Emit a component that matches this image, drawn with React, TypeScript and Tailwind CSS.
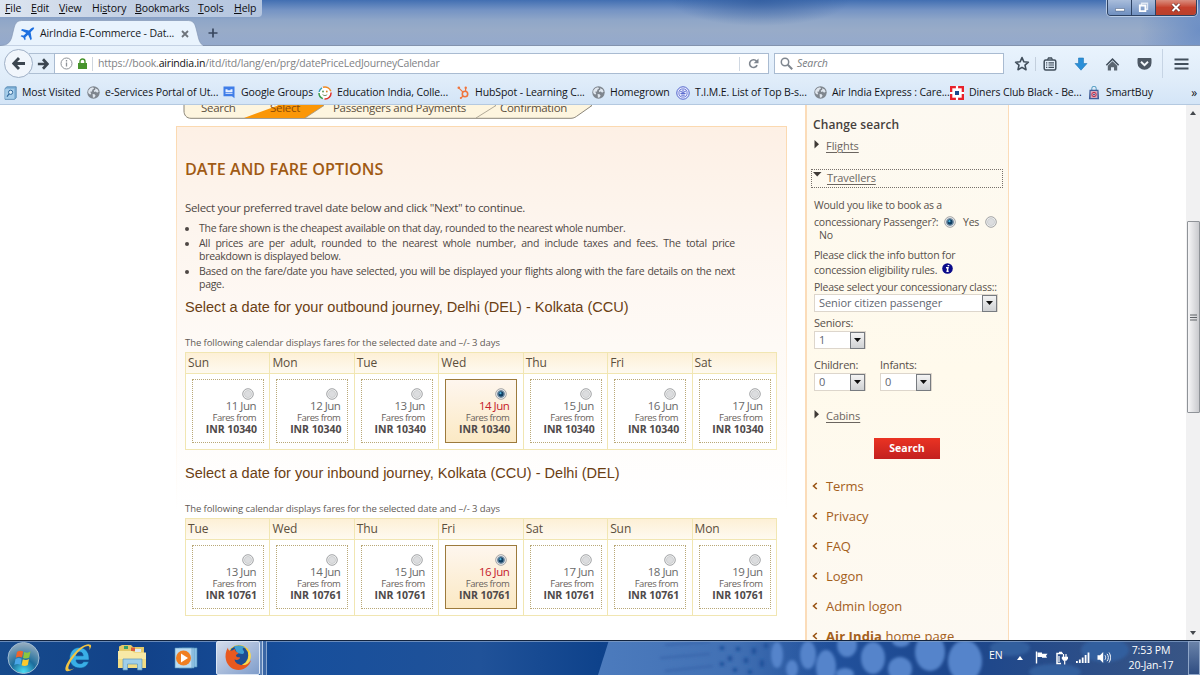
import type { ReactNode } from 'react';

const MENUS = [
  { first: 'F', rest: 'ile', width: 'w-[26px]' },
  { first: 'E', rest: 'dit', width: 'w-[28px]' },
  { first: 'V', rest: 'iew', width: 'w-[33px]' },
  { before: 'Hi', first: 's', rest: 'tory', width: 'w-[43px]' },
  { first: 'B', rest: 'ookmarks', width: 'w-[63px]' },
  { first: 'T', rest: 'ools', width: 'w-[36px]' },
  { first: 'H', rest: 'elp', width: 'w-[28px]' },
];

const OUTBOUND = [
  { day: 'Sun', date: '11 Jun' },
  { day: 'Mon', date: '12 Jun' },
  { day: 'Tue', date: '13 Jun' },
  { day: 'Wed', date: '14 Jun' },
  { day: 'Thu', date: '15 Jun' },
  { day: 'Fri', date: '16 Jun' },
  { day: 'Sat', date: '17 Jun' },
];

const INBOUND = [
  { day: 'Tue', date: '13 Jun' },
  { day: 'Wed', date: '14 Jun' },
  { day: 'Thu', date: '15 Jun' },
  { day: 'Fri', date: '16 Jun' },
  { day: 'Sat', date: '17 Jun' },
  { day: 'Sun', date: '18 Jun' },
  { day: 'Mon', date: '19 Jun' },
];

const LINKS = ['Terms', 'Privacy', 'FAQ', 'Logon', 'Admin logon'];

function GlobeIcon() {
  return (
    <svg width="13" height="13" viewBox="0 0 13 13">
      <circle cx="6.5" cy="6.5" r="6.2" fill="#7f868e" />
      <path d="M1.3 4.6 3.5 2l2.6-.7 1 1.3-1.8 1.2-.3 1.7-1.8.3 1 1.8-1 1.2-2-1.7zM8 2.2l2.4 1 1.3 2.4-1.6 1.2-1.3-1.2-1.6.5-.4-1.6 1.5-.7zM5.6 8l2 .3 1 1.5-1.5 2-1.2-.3z" fill="#dfe6ee" />
    </svg>
  );
}

function MostVisitedIcon() {
  return (
    <svg width="13" height="14" viewBox="0 0 13 14">
      <path d="M1 2.5 3 .8h9.200v11L10.500 13.3H1z" fill="#7fb2d9" stroke="#4c80ab" strokeWidth=".8" />
      <path d="M1.2 2.8h9v10h-9z" fill="#a6cdea" />
      <circle cx="6.6" cy="6.3" r="2.1" fill="#dff0fb" stroke="#2f6699" strokeWidth="1" />
      <path d="m5 8-2 2.6" stroke="#2f6699" strokeWidth="1.2" />
    </svg>
  );
}

function GroupsIcon() {
  return (
    <svg width="12" height="13" viewBox="0 0 12 13">
      <path d="M.5.5h11v11.8L9 10.2H.5z" fill="#3f7de8" />
      <path d="M2.5 3.2h2v1h3v-1h2v3h-7zM2.5 7.2h7v.9h-7z" fill="#e9f1ff" />
    </svg>
  );
}

function EducationIcon() {
  return (
    <svg width="14" height="14" viewBox="0 0 14 14" fill="none" strokeWidth="1.5">
      <circle cx="7" cy="7" r="6" fill="#fff" />
      <path d="M5 1.300a6 6 0 0 1 7.800 4" stroke="#f08a24" />
      <path d="M13 6.500A6 6 0 0 1 6.500 13" stroke="#e0322c" />
      <path d="M4.800 12.600A6 6 0 0 1 1 7" stroke="#3b9b4b" />
      <path d="M1.100 5.800A6 6 0 0 1 4 1.800" stroke="#37a0b8" />
      <circle cx="5" cy="5.500" r=".9" fill="#57914e" stroke="none" />
      <circle cx="8.800" cy="5.500" r=".9" fill="#d9822c" stroke="none" />
      <path d="M4.600 8.600c1.400 1.300 3.400 1.300 4.600 0" stroke="#7d8f6a" strokeWidth="1" />
    </svg>
  );
}

function HubspotIcon() {
  return (
    <svg width="13" height="13" viewBox="0 0 13 13" fill="none" stroke="#f0743c">
      <circle cx="8" cy="8" r="2.7" strokeWidth="1.6" />
      <path d="M8.6 5.2V2M6 6.2 2.2 2.4M6 10l-2 2" strokeWidth="1.2" />
      <g fill="#f0743c" stroke="none">
        <circle cx="8.7" cy="1.8" r="1.2" />
        <circle cx="1.8" cy="1.7" r="1.3" />
        <circle cx="3.8" cy="12" r="1" />
      </g>
    </svg>
  );
}

function TimeIcon() {
  return (
    <svg width="14" height="14" viewBox="0 0 15 15" fill="none" stroke="#4b5dc8">
      <circle cx="7.5" cy="7.5" r="6.7" fill="#e8ecff" />
      <circle cx="7.5" cy="7.5" r="4.4" strokeWidth=".8" />
      <path d="M4.500 5.500 7.500 7l3-1.500M4.800 8h5.400M7.500 4v2M5.600 9.800h3.800" strokeWidth="1" />
    </svg>
  );
}

function DinersIcon() {
  return (
    <svg width="14" height="14" viewBox="0 0 14 14">
      <path d="M0 0h14v14H0z" fill="#e8222b" />
      <path d="M2.3 2.3h9.4v9.4H2.3z" fill="#fff" />
      <path d="M5.9 0h2.2v3H5.9zM5.9 11h2.2v3H5.9zM0 5.9h3v2.2H0zM11 5.9h3v2.2h-3z" fill="#fff" />
      <path d="M5 5h4v4H5z" fill="#1a4a8e" />
    </svg>
  );
}

function SmartBuyIcon() {
  return (
    <svg width="12" height="14" viewBox="0 0 12 14">
      <path d="M3.8 4V2.4a2.2 2.2 0 0 1 4.4 0V4" fill="none" stroke="#4c9ac0" strokeWidth="1" />
      <path d="M1.5 3.8h9l.6 9.4H.9z" fill="#3f5c96" />
      <path d="M2.6 5h6.8v7H2.6z" fill="#d8a9bb" />
      <circle cx="6" cy="8.5" r="2.2" fill="none" stroke="#c12d4a" />
      <circle cx="6" cy="8.5" r=".8" fill="#23407d" />
    </svg>
  );
}

const BOOKMARKS: { label: string; icon: ReactNode; width: string }[] = [
  { label: 'Most Visited', icon: <MostVisitedIcon />, width: 'w-[83px]' },
  { label: 'e-Services Portal of Ut...', icon: <GlobeIcon />, width: 'w-[136px]' },
  { label: 'Google Groups', icon: <GroupsIcon />, width: 'w-[96px]' },
  { label: 'Education India, Colle...', icon: <EducationIcon />, width: 'w-[138px]' },
  { label: 'HubSpot - Learning C...', icon: <HubspotIcon />, width: 'w-[135px]' },
  { label: 'Homegrown', icon: <GlobeIcon />, width: 'w-[85px]' },
  { label: 'T.I.M.E. List of Top B-s...', icon: <TimeIcon />, width: 'w-[137px]' },
  { label: 'Air India Express : Care...', icon: <GlobeIcon />, width: 'w-[137px]' },
  { label: 'Diners Club Black - Be...', icon: <DinersIcon />, width: 'w-[137px]' },
  { label: 'SmartBuy', icon: <SmartBuyIcon />, width: 'w-[70px]' },
];

function WindowControls() {
  return (
    <div className="flex h-[16px] w-[90px] overflow-hidden rounded-b-[4px] border border-t-0 border-[#2d4263] shadow-[0_0_0_1px_#b9cbe4]">
      <div className="flex w-[24px] items-center justify-center border-r border-[#2d4263] bg-gradient-to-b from-[#a9bddb] to-[#6f8fc0]">
        <svg width="10" height="10" viewBox="0 0 10 10">
          <path d="M.5 5.5h9v2.6h-9z" fill="#fff" stroke="#44587b" strokeWidth=".5" />
        </svg>
      </div>
      <div className="flex w-[24px] items-center justify-center border-r border-[#2d4263] bg-gradient-to-b from-[#a9bddb] to-[#6f8fc0]">
        <svg width="11" height="11" viewBox="0 0 11 11" fill="none">
          <path d="M3.5 3V1.2h6v6H8" stroke="#dfe7f3" strokeWidth="1.4" />
          <path d="M1.8 3.5h5.6v5.6H1.8z" stroke="#fff" strokeWidth="1.8" />
        </svg>
      </div>
      <div className="flex flex-1 items-center justify-center bg-gradient-to-b from-[#d98d7f] via-[#c5402c] to-[#b8402c]">
        <svg width="10" height="9" viewBox="0 0 10 9">
          <path d="m1.5 1 7 7M8.5 1l-7 7" stroke="#5b2723" strokeWidth="3.2" />
          <path d="m1.5 1 7 7M8.5 1l-7 7" stroke="#fff" strokeWidth="2.1" />
        </svg>
      </div>
    </div>
  );
}

function TitleBar() {
  return (
    <div className="flex h-[17px] items-start justify-between pr-[3px]">
      <div className="flex h-[17px] w-[262px] items-center rounded-br-[4px] bg-gradient-to-r from-[#dde5f0] via-[#c3d0e4] to-[#b4c5df] pt-px pl-[5px] text-[10.5px] tracking-[-0.1px] whitespace-nowrap text-[#0c0c10]">
        {MENUS.map((m) => (
          <span key={m.first + m.rest} className={m.width}>
            {m.before}
            <u className="underline-offset-1">{m.first}</u>
            {m.rest}
          </span>
        ))}
      </div>
      <WindowControls />
    </div>
  );
}

function TabStrip() {
  return (
    <div className="flex h-[29px] items-start border-b border-[#8393ae]">
      <div className="relative h-[29px] w-[203px]">
        <svg className="absolute inset-0" width="203" height="29" viewBox="0 0 203 29">
          <path d="M0 29v-.5C8 28.500 11 25 12.500 17l1.500-6c1.500-6 4-7.500 9-7.500h164c5 0 7.500 1.500 9 7.500l1.500 6c1.300 6 2.500 10 6 11.500v.5z" fill="#e9f3fd" stroke="#8496b4" strokeWidth=".7" />
        </svg>
        <div className="relative flex h-[33px] items-center pl-[20px] text-[10.5px] text-[#16181c]">
          <svg width="15" height="14" viewBox="0 0 15 14">
            <path d="M14 .6c-.9-.6-2.200.1-3.300 1.200L9 3.400 2.200 2 .9 3.200l5.300 2.700L3.700 8.500l-2.300-.2-.8.900 2.700 1.300 1.400 2.800.9-.8-.2-2.300 2.700-2.500 2.500 5.500 1.200-1.200-1.200-6.800 1.700-1.600C13.600 2.500 14.600 1.300 14 .6z" fill="#1c6fe0" />
          </svg>
          <span className="ml-[5px] w-[141px] tracking-[-0.12px] whitespace-nowrap">AirIndia E-Commerce - Dat...</span>
          <svg width="8" height="8" viewBox="0 0 8 8">
            <path d="m1 1 6 6M7 1 1 7" stroke="#6e747c" strokeWidth="1.8" />
          </svg>
        </div>
      </div>
      <svg className="mt-[11px] ml-[5px]" width="10" height="10" viewBox="0 0 10 10">
        <path d="M5 .5v9M.5 5h9" stroke="#39475f" strokeWidth="1.7" />
      </svg>
    </div>
  );
}

function NavBar() {
  return (
    <div className="flex h-[35px] items-center bg-gradient-to-b from-[#e9f3fd] to-[#dfecf9] pl-[4px]">
      <div className="relative z-10 flex size-[29px] items-center justify-center rounded-full border border-[#9fb0c6] bg-[#f1f6fc]">
        <svg width="14" height="13" viewBox="0 0 14 13" fill="none" stroke="#3c4650">
          <path d="M7 1 1.800 6.500 7 12M2 6.500h11" strokeWidth="2.800" />
        </svg>
      </div>
      <div className="-ml-[4px] flex h-[21px] w-[25px] items-center justify-center border-y border-[#aebfd3] bg-[#e4effa] pl-[2px]">
        <svg width="12" height="12" viewBox="0 0 14 13" fill="none" stroke="#3c4650">
          <path d="m7 1 5.200 5.500L7 12M12 6.500H1" strokeWidth="3.200" />
        </svg>
      </div>
      <div className="flex h-[21px] w-[715px] items-center border border-[#a9bbd1] bg-white pl-[5px] text-[10.5px]">
        <svg width="13" height="13" viewBox="0 0 13 13" fill="none" stroke="#8d9298">
          <circle cx="6.500" cy="6.500" r="5.500" />
          <path d="M6.500 5.500v4M6.500 3v1.400" strokeWidth="1.300" />
        </svg>
        <svg className="ml-[5px]" width="9" height="12" viewBox="0 0 9 12">
          <path d="M2 5.500V3.500a2.500 2.500 0 0 1 5 0v2" fill="none" stroke="#47932c" strokeWidth="1.400" />
          <path d="M0 5h9v6H0z" fill="#47932c" />
        </svg>
        <div className="mx-[5px] h-[14px] w-px bg-[#cfd6de]" />
        <span className="flex-1 pt-px tracking-[-0.19px] whitespace-nowrap text-[#808285]">
          https://book.<span className="text-[#101010]">airindia.in</span>/itd/itd/lang/en/prg/datePriceLedJourneyCalendar
        </span>
        <div className="h-[14px] w-px bg-[#d0d8e2]" />
        <svg className="mr-[9px] ml-[8px]" width="11" height="11" viewBox="0 0 11 11" fill="none" stroke="#7f868f">
          <path d="M8.600 3.200a3.900 3.900 0 1 0 .5 3.900" strokeWidth="1.600" />
          <path d="M10.500.5v4.800H5.700z" fill="#7f868f" stroke="none" />
        </svg>
      </div>
      <div className="ml-[5px] flex h-[21px] w-[230px] items-center border border-[#a9bbd1] bg-white pl-[5px]">
        <svg width="13" height="13" viewBox="0 0 13 13" fill="none" stroke="#7f868f">
          <circle cx="5" cy="5" r="3.700" strokeWidth="1.500" />
          <path d="m7.800 7.800 4.400 4.400" strokeWidth="2" />
        </svg>
        <span className="ml-[4px] pt-px text-[10.5px] tracking-[-0.1px] text-[#777b80] italic">Search</span>
      </div>
      <svg className="ml-[10px]" width="16" height="16" viewBox="0 0 16 16" fill="none" stroke="#424f5c">
        <path d="m8 1.600 1.900 4.200 4.500.4-3.400 3 1 4.500L8 11.400l-4 2.300 1-4.500-3.400-3 4.500-.4z" strokeWidth="1.600" strokeLinejoin="round" />
      </svg>
      <div className="mx-[5px] h-[14px] w-px bg-[#c3cfdd]" />
      <svg className="ml-[2px]" width="14" height="14" viewBox="0 0 14 14" fill="none" stroke="#424f5c">
        <rect x="1.200" y="3" width="11.600" height="10" rx="1.500" strokeWidth="1.500" />
        <path d="M4.500 2.800 5.500 1h3l1 1.800" strokeWidth="1.300" />
        <path d="M3 5.800h1.300M5.500 5.800H11M3 8h1.300M5.500 8H11M3 10.300h1.300M5.500 10.300H11" strokeWidth="1.200" />
      </svg>
      <svg className="ml-[17px]" width="14" height="14" viewBox="0 0 14 14">
        <path d="M4.500 1h5v5.500H13l-6 6.700-6-6.700h3.500z" fill="#2a8fd8" stroke="#2479b8" strokeWidth=".6" />
      </svg>
      <svg className="ml-[17px]" width="15" height="14" viewBox="0 0 15 14">
        <path d="M7.500 1 .8 7.700l1.100 1.100 5.600-5.500 5.600 5.500 1.100-1.100z" fill="#424f5c" />
        <path d="M2.800 8.800 7.500 4.300l4.700 4.500v4.700H9v-3.300H6v3.300H2.800z" fill="#5b6671" />
      </svg>
      <svg className="ml-[17px]" width="15" height="14" viewBox="0 0 15 14">
        <path d="M1.800 1h11.400c.8 0 1.300.5 1.300 1.200V6a7 6.800 0 0 1-14 0V2.200C.5 1.500 1 1 1.800 1z" fill="#4d5864" />
        <path d="m4 4.700 3.500 3.400L11 4.700" fill="none" stroke="#f4f8fc" strokeWidth="1.900" />
      </svg>
      <div className="ml-[10px] h-[29px] w-px bg-[#c6d4e4]" />
      <svg className="ml-[11px]" width="15" height="12" viewBox="0 0 15 12">
        <path d="M.5 1.500h14M.5 6h14M.5 10.500h14" stroke="#424f5c" strokeWidth="2.200" />
      </svg>
    </div>
  );
}

function BookmarksBar() {
  return (
    <div className="flex h-[24px] items-center border-b border-[#b4c9e0] bg-gradient-to-b from-[#dfecf9] to-[#d4e5f7] pl-[3px] text-[10.5px] tracking-[-0.1px] text-[#121418]">
      {BOOKMARKS.map((b) => (
        <div key={b.label} className={`flex shrink-0 items-center gap-[5px] whitespace-nowrap ${b.width}`}>
          <div className="flex w-[14px] shrink-0 justify-center">{b.icon}</div>
          <span className="pt-px">{b.label}</span>
        </div>
      ))}
      <span className="ml-auto pr-[3px] text-[12px]">»</span>
    </div>
  );
}

function StepsBar() {
  return (
    <div className="relative -mt-[7px] ml-[7px] h-[22px] w-[412px] text-[11.5px] tracking-[-0.3px] text-[#5c5040]">
      <svg className="absolute inset-0" width="412" height="22" viewBox="0 0 412 22">
        <path d="M1 0v13c0 4 2.500 7.300 7 7.300h332c3 0 5-1.500 7-3l13-9.800L400 0z" fill="none" />
        <path d="M1 0v13c0 4 2.500 7.300 7 7.300h380c3 0 5-1.500 7-3l14-9.800L396 0z" fill="#fdf5df" stroke="#8b8578" strokeWidth="1" />
        <path d="m82 0 13 7.500L61 20h61l19-12.500L129 0z" fill="#fb9707" />
        <path d="m129 0 12 7.500L122 20M300 0l13 7.500L293 20" fill="none" stroke="#9d9585" strokeWidth=".8" />
      </svg>
      <div className="relative flex h-[20px] items-center whitespace-nowrap">
        <span className="ml-[18px] w-[69px]">Search</span>
        <span className="w-[63px] text-[#8a4a06]">Select</span>
        <span className="w-[167px]">Passengers and Payments</span>
        <span>Confirmation</span>
      </div>
    </div>
  );
}

function Radio({ checked }: { checked?: boolean }) {
  return (
    <svg className="shrink-0" width="12" height="12" viewBox="0 0 12 12">
      <circle cx="6" cy="6" r="5.300" fill="#f2f2f2" stroke="#8a8d91" strokeWidth=".8" />
      <circle cx="6" cy="6" r="3.600" fill={checked ? '#9fb9cb' : '#dcdddf'} stroke={checked ? '#44607a' : '#bfc2c5'} strokeWidth=".6" />
      {checked && <circle cx="6" cy="6" r="2.700" fill="#123f63" />}
      {checked && <circle cx="5.400" cy="5.200" r="1.100" fill="#4fb3dc" />}
    </svg>
  );
}

function Calendar({ days, selected, fare }: { days: { day: string; date: string }[]; selected: number; fare: string }) {
  return (
    <div className="mt-[2px] grid h-[98px] w-[592px] grid-cols-7 border-t border-l border-[#f1e6b2]">
      {days.map((d, i) => (
        <div key={d.date} className="flex flex-col border-r border-b border-[#f1e6b2] bg-white">
          <div className="h-[21px] border-b border-[#f1e6b2] bg-gradient-to-b from-[#fdf0d6] to-[#fefaf0] pl-[2px] text-[12px] leading-[20px] tracking-[-0.1px] text-[#5b4e3c]">
            {d.day}
          </div>
          <div
            className={`mt-[5px] ml-[6px] flex h-[64px] w-[72px] flex-col items-end border pr-[7px] whitespace-nowrap ${
              i === selected
                ? 'border-[#9c7a3c] bg-gradient-to-b from-[#fef6ee] to-[#fbe9c4]'
                : 'border-dotted border-[#b9a877] bg-white'
            }`}
          >
            <div className="mt-[8px] mr-[2px] h-[11px]">
              <Radio checked={i === selected} />
            </div>
            <div
              className={`h-[13px] text-[11.5px] leading-[14px] tracking-[-0.5px] ${
                i === selected ? 'text-[#c4202b]' : 'text-[#6a6a6a]'
              }`}
            >
              {d.date}
            </div>
            <div className="h-[11px] text-[9.5px] leading-[12px] tracking-[-0.45px] text-[#6a625c]">Fares from</div>
            <div className="-mr-px h-[13px] text-[10.5px] leading-[13px] font-bold tracking-[-0.05px] text-[#4f4a4a]">{fare}</div>
          </div>
        </div>
      ))}
    </div>
  );
}

function FareOptions() {
  return (
    <div className="mt-[6px] h-[620px] w-[611px] shrink-0 border border-[#fbdcb8] bg-[linear-gradient(to_bottom,#fdf0e5_0px,#fdf5ee_100px,#fefaf6_220px,#ffffff_380px)] [border-image:linear-gradient(to_bottom,#fbd9b0,#ffffff_62%)_1] pl-[8px] text-[#4e4744]">
      <h1 className="mt-[32px] h-[20px] text-[16.2px] leading-[20px] font-semibold whitespace-nowrap text-[#a05a14]">DATE AND FARE OPTIONS</h1>
      <p className="mt-[22px] h-[14px] text-[11.5px] leading-[14px] tracking-[-0.33px] whitespace-nowrap">
        Select your preferred travel date below and click "Next" to continue.
      </p>
      <ul className="mt-[7px] flex w-[550px] list-disc flex-col gap-[2px] pl-[14px] text-justify text-[10.5px] leading-[13px] tracking-[-0.28px] marker:text-[#4e4744]">
        <li>The fare shown is the cheapest available on that day, rounded to the nearest whole number.</li>
        <li>
          All prices are per adult, rounded to the nearest whole number, and include taxes and fees. The total price
          breakdown is displayed below.
        </li>
        <li>
          Based on the fare/date you have selected, you will be displayed your flights along with the fare details on the next
          page.
        </li>
      </ul>
      <h2 className="mt-[7px] h-[18px] font-['Liberation_Sans',sans-serif] text-[14.56px] leading-[18px] whitespace-nowrap text-[#6b3f14]">
        Select a date for your outbound journey, Delhi (DEL) - Kolkata (CCU)
      </h2>
      <p className="mt-[20px] h-[14px] text-[9.5px] leading-[14px] tracking-[-0.07px] whitespace-nowrap text-[#625a55]">
        The following calendar displays fares for the selected date and –/- 3 days
      </p>
      <Calendar days={OUTBOUND} selected={3} fare="INR 10340" />
      <h2 className="mt-[14px] h-[18px] font-['Liberation_Sans',sans-serif] text-[14.56px] leading-[18px] whitespace-nowrap text-[#6b3f14]">
        Select a date for your inbound journey, Kolkata (CCU) - Delhi (DEL)
      </h2>
      <p className="mt-[20px] h-[14px] text-[9.5px] leading-[14px] tracking-[-0.07px] whitespace-nowrap text-[#625a55]">
        The following calendar displays fares for the selected date and –/- 3 days
      </p>
      <Calendar days={INBOUND} selected={3} fare="INR 10761" />
    </div>
  );
}

function SelectBox({ value, width }: { value: string; width: string }) {
  return (
    <div className={`flex h-[18px] items-center justify-between border border-[#ddd6cc] bg-white pl-[4px] text-[11px] text-[#5f6670] ${width}`}>
      <span className="tracking-[-0.05px] whitespace-nowrap">{value}</span>
      <div className="flex h-[17px] w-[15px] items-center justify-center border border-[#777b80] bg-gradient-to-b from-[#f4f4f4] to-[#cfd1d3]">
        <svg width="7" height="4" viewBox="0 0 7 4">
          <path d="M0 0h7L3.500 4z" fill="#0f0f0f" />
        </svg>
      </div>
    </div>
  );
}

function Arrow({ open }: { open?: boolean }) {
  return (
    <svg className={open ? 'shrink-0' : 'mt-px shrink-0'} width="9" height="9" viewBox="0 0 9 9">
      <path d={open ? 'M0 2h8.500L4.200 6.500z' : 'M2.500 0v8.500L7 4.200z'} fill="#3f3a36" />
    </svg>
  );
}

function Chevron() {
  return (
    <svg className="mr-[8px] ml-[1px]" width="6" height="8" viewBox="0 0 6 8">
      <path d="M4.800 1 1.500 4l3.300 3" fill="none" stroke="#9a5414" strokeWidth="1.600" />
    </svg>
  );
}

function Sidebar() {
  return (
    <div className="h-[536px] w-[204px] shrink-0 border-r border-l-2 border-[#fbdcb9] bg-gradient-to-b from-[#fdf9f1] via-[#fffaec] to-[#fdf9f2] pl-[4px] text-[10.5px] leading-[14px] tracking-[-0.22px] whitespace-nowrap text-[#57504b]">
      <h3 className="mt-[13px] ml-[2px] h-[14px] text-[12px] font-semibold tracking-[0.1px] text-[#453f3c]">Change search</h3>
      <div className="mt-[7px] flex h-[14px] gap-[5px] pl-[1px] text-[11px] tracking-[-0.05px] text-[#6b655f]">
        <Arrow />
        <span className="underline underline-offset-2">Flights</span>
      </div>
      <div className="mt-[16px] flex h-[19px] w-[192px] gap-[5px] border border-dotted border-[#77706a] pl-[1px] text-[11px] leading-[15px] tracking-[-0.1px] text-[#6b655f]">
        <Arrow open />
        <span className="underline underline-offset-2">Travellers</span>
      </div>
      <div className="pl-[3px]">
        <p className="mt-[10px]">Would you like to book as a</p>
        <div className="mt-[3px] flex h-[13px] items-center">
          <span className="w-[130px]">concessionary Passenger?:</span>
          <Radio checked />
          <span className="ml-[7px] w-[22px]">Yes</span>
          <Radio />
        </div>
        <p className="pl-[5px]">No</p>
        <p className="mt-[6px]">Please click the info button for</p>
        <div className="mt-[1px] flex h-[14px] items-center">
          <span className="w-[128px]">concession eligibility rules.</span>
          <svg className="-mt-[4px]" width="11" height="11" viewBox="0 0 11 11">
            <circle cx="5.500" cy="5.500" r="5.300" fill="#0b0b8a" />
            <path d="M5.600 2.600h1.700M4 4.700h2L5.200 8.300h1.500" stroke="#fff" strokeWidth="1.400" fill="none" />
          </svg>
        </div>
        <p className="mt-[3px]">Please select your concessionary class::</p>
        <SelectBox value="Senior citizen passenger" width="w-[184px]" />
        <p className="mt-[4px] text-[11px]">Seniors:</p>
        <div className="mt-[1px]">
          <SelectBox value="1" width="w-[52px]" />
        </div>
        <div className="mt-[9px] flex gap-[14px] text-[11px]">
          <div>
            <p className="mb-[1px]">Children:</p>
            <SelectBox value="0" width="w-[52px]" />
          </div>
          <div>
            <p className="mb-[1px]">Infants:</p>
            <SelectBox value="0" width="w-[52px]" />
          </div>
        </div>
      </div>
      <div className="mt-[18px] flex h-[14px] gap-[5px] pl-[1px] text-[11px] tracking-[-0.05px] text-[#6b655f]">
        <Arrow />
        <span className="underline underline-offset-2">Cabins</span>
      </div>
      <button className="mt-[15px] ml-[63px] block h-[21px] w-[66px] bg-gradient-to-b from-[#ea3323] to-[#c3201f] text-[10.5px] leading-[19px] font-bold tracking-normal text-white">
        Search
      </button>
      <ul className="mt-[12px] text-[13px] leading-[30px] tracking-[-0.05px] text-[#a4601c]">
        {LINKS.map((link) => (
          <li key={link} className="flex h-[30px] items-center">
            <Chevron />
            {link}
          </li>
        ))}
        <li className="flex h-[30px] items-center tracking-[0.1px]">
          <Chevron />
          <span>
            <b>Air India</b> home page
          </span>
        </li>
      </ul>
    </div>
  );
}

function Scrollbar() {
  return (
    <div className="ml-auto flex h-full w-[14px] flex-col items-center bg-[#f1f1f2]">
      <svg className="mt-[6px]" width="6" height="4" viewBox="0 0 6 4">
        <path d="M0 4h6L3 0z" fill="#44484d" />
      </svg>
      <div className="mt-[106px] flex h-[192px] w-[13px] items-center justify-center rounded-[1px] border border-[#8f9398] bg-gradient-to-r from-[#f6f6f7] to-[#c9cace]">
        <svg width="7" height="7" viewBox="0 0 7 7">
          <path d="M0 1h7M0 3.500h7M0 6h7" stroke="#5e6267" strokeWidth="1" />
        </svg>
      </div>
      <svg className="mt-auto mb-[5px]" width="6" height="4" viewBox="0 0 6 4">
        <path d="M0 0h6L3 4z" fill="#44484d" />
      </svg>
    </div>
  );
}

function Wallpaper() {
  const blobs = [
    [777, 655, 6, 13], [792, 669, 6, 9], [808, 655, 8, 14], [826, 667, 10, 17], [847, 645, 10, 12],
    [845, 674, 9, 6], [873, 658, 12, 16], [900, 669, 12, 12], [901, 641, 9, 6], [930, 652, 15, 19],
    [965, 661, 17, 21], [1010, 648, 20, 8], [1055, 672, 26, 8], [1105, 650, 24, 12],
  ];
  return (
    <svg className="absolute inset-0" width="1200" height="35" viewBox="0 640 1200 35">
      <defs>
        <linearGradient id="sky" x1="0" x2="1">
          <stop offset="0" stopColor="#164a8c" />
          <stop offset=".12" stopColor="#124289" />
          <stop offset=".25" stopColor="#174f9c" />
          <stop offset=".4" stopColor="#205299" />
          <stop offset=".5" stopColor="#0e428b" />
          <stop offset=".55" stopColor="#1a4a94" />
          <stop offset=".7" stopColor="#21509b" />
          <stop offset=".8" stopColor="#1c468c" />
          <stop offset="1" stopColor="#3a5685" />
        </linearGradient>
        <linearGradient id="glass" x1="0" x2="1">
          <stop offset="0" stopColor="#4c7bbd" />
          <stop offset=".6" stopColor="#4170b4" />
          <stop offset="1" stopColor="#4170b4" stopOpacity="0" />
        </linearGradient>
        <filter id="soft">
          <feGaussianBlur stdDeviation="1.800" />
        </filter>
      </defs>
      <rect y="640" width="1200" height="35" fill="url(#sky)" />
      <path d="M609 640h221v35H598z" fill="url(#glass)" />
      <g filter="url(#soft)">
        {blobs.map(([cx, cy, rx, ry]) => (
          <ellipse key={cx} cx={cx} cy={cy} rx={rx} ry={ry} fill={cx < 985 ? '#5584cb' : '#335f9e'} />
        ))}
        <path d="M665 645l45-3M660 658l50-4M665 671l48-5" stroke="#3765ab" strokeWidth="2" fill="none" />
        <path d="M722 646v4M730 656v5M738 647v4M746 658v5M754 648v6M735 668v4M750 670v4M762 660v7M766 643v5M722 662v4" stroke="#24529b" strokeWidth="4.500" fill="none" />
      </g>
      <path d="M0 640.500h1200" stroke="#12243f" />
      <path d="M0 641.500h1200" stroke="#7f9cc4" strokeWidth=".8" />
    </svg>
  );
}

function Taskbar() {
  return (
    <div className="relative h-[35px] shrink-0 overflow-hidden text-white">
      <Wallpaper />
      <div className="relative flex h-full items-center pl-[7px]">
        {/* Start */}
        <svg width="33" height="33" viewBox="0 0 33 33">
          <defs>
            <radialGradient id="orb" cx=".5" cy=".95" r=".9">
              <stop offset="0" stopColor="#4be0f5" />
              <stop offset=".45" stopColor="#1c6d9c" />
              <stop offset="1" stopColor="#8fa9bd" />
            </radialGradient>
          </defs>
          <circle cx="16.500" cy="17" r="15.500" fill="url(#orb)" stroke="#9dbad2" />
          <path d="M10 11c2-1.500 4-1.600 6.200-.5l-1.200 6c-2-1-4-1-6.200.3z" fill="#f0642a" />
          <path d="M17.200 11c2.200 1 4.300.9 6.300-.4l-1.300 6c-2 1.300-4.200 1.300-6.200.3z" fill="#8cc63e" />
          <path d="M8.500 18c2-1.300 4.200-1.300 6.200-.3l-1.200 6c-2-1-4.100-1-6.200.3z" fill="#4aa6e8" />
          <path d="M15.800 18.200c2.100 1 4.200.9 6.200-.3l-1.200 6c-2 1.300-4.200 1.300-6.200.3z" fill="#fbc92c" />
        </svg>
        {/* Internet Explorer */}
        <svg className="ml-[22px]" width="32" height="30" viewBox="0 0 32 30">
          <path d="M17 4.500c6 0 10 4.300 10 10.500v2H14c.3 2.500 1.600 3.700 4 3.700 1.700 0 2.800-.6 3.500-2h5.200c-1.400 4.200-4.500 6.300-9 6.300-6 0-10-4-10-10.200 0-6 4-10.300 9.300-10.300zm-3 8.300h7.200c-.3-2.600-1.500-3.900-3.500-3.900-2.100 0-3.300 1.300-3.700 3.900z" fill="#39aee6" stroke="#0d538f" strokeWidth=".6" />
          <path d="M28.600 1.800c-3.600-2-10.500 1.800-16.500 8.600C5 18.500 1.500 26.500 4.300 28c1.600.8 4.600-.3 8-2.800-2.800 1.500-5 1.800-5.700.7-1.200-2 2-8.300 7.400-14.500C19 5.700 24.600 2 26.800 3.300c.9.500 1 1.900.4 3.800 1.900-2.500 2.400-4.500 1.400-5.300z" fill="#f2c443" />
        </svg>
        {/* Explorer */}
        <svg className="ml-[23px]" width="30" height="27" viewBox="0 0 30 27">
          <path d="M2 2.500 5 1h9l2 2h11v8H2z" fill="#e4c969" />
          <path d="M7 2h4v3H7z" fill="#35a26a" />
          <path d="M14 3.500h4V7h-4z" fill="#d95c3a" />
          <path d="M18 5h6v3h-6z" fill="#dfe9f2" />
          <path d="M1 7h14l2 1.500h12V24H1z" fill="#f8e9a6" />
          <path d="M1 15h28v9H1z" fill="#f1dc84" />
          <path d="M6 15h19v11h-4.500v-6h-10v6H6z" fill="#9fcfe9" stroke="#5c97bd" strokeWidth=".7" />
        </svg>
        {/* Media player */}
        <svg className="ml-[27px]" width="24" height="22" viewBox="0 0 24 22">
          <path d="M8 1h15v19H8z" fill="#8dc3e6" stroke="#4f8db8" strokeWidth=".6" />
          <path d="M5 1h15v20H5z" fill="#a5d2ee" stroke="#4f8db8" strokeWidth=".6" />
          <path d="M1 1h17v20H1z" fill="#b9dcf3" stroke="#4f8db8" strokeWidth=".6" />
          <circle cx="9.500" cy="11" r="7.500" fill="#f07f22" />
          <path d="M7 6.500v9l7-4.500z" fill="#fff" />
        </svg>
        {/* Firefox */}
        <div className="ml-[18px] flex h-[34px] w-[44px] items-center justify-center rounded-[2px] border border-[#dbe6f5] bg-gradient-to-br from-[#d4dcea] to-[#7f9dcb]">
          <svg width="27" height="27" viewBox="0 0 27 27">
            <circle cx="14" cy="12.500" r="11.500" fill="#f7cb33" />
            <circle cx="13.500" cy="11.500" r="9.800" fill="#1d4f93" />
            <path d="M9 2.500c3-1.500 8-1.500 11 1-2 0-3 1-2 2.500 2 2 1 4-1 4l-5-1z" fill="#3f9fd0" />
            <path d="M3 3.500C.5 7.500 0 12 1 16c1.500 6 6.500 10 12.500 10S25 21.500 26 16c-2 3.500-5 5.500-8.500 5-4.500 0-7.500-2.500-8-5.500 1.500.8 3.500.6 5-.7.800-.8.500-1.500-.5-1.500-1.500 0-3-.5-3-1.800 0-1 2.300-1.200 2.500-2.500-1.500-.5-3.500-1.300-3.500-4-1.300.3-2.200 1-2.800 1.500-1-.2-2.200 0-2.800.2C3.500 6 3 5 3 3.500z" fill="#e8591f" />
            <path d="M24 6c2.500 4 2 8 .5 11-1.500 2.500-4 4-7 4 4-2 6-5 6-9 0-2 .2-4 .5-6z" fill="#f9dc52" />
          </svg>
        </div>
        <div className="h-[34px] w-[3px] border-r border-[#b8cce6] bg-[#5d82b6]" />
        <div className="h-[34px] w-[4px] border-r border-[#86a4cd] bg-[#3a66a5]" />

        {/* Tray */}
        <div className="ml-auto flex items-center text-[10.5px]">
          <span className="mb-[4px] w-[28px]">EN</span>
          <svg width="6" height="4" viewBox="0 0 6 4">
            <path d="M0 4h6L3 0z" fill="#fff" />
          </svg>
          <svg className="ml-[12px]" width="13" height="13" viewBox="0 0 13 13">
            <path d="M1.500.5v12" stroke="#fff" strokeWidth="1.400" />
            <path d="M2.500 1.500H7v1.300h5.500L11 4.800l1 2H7V6H2.500z" fill="#fff" />
          </svg>
          <svg className="ml-[7px]" width="13" height="14" viewBox="0 0 13 14" fill="none" stroke="#fff">
            <path d="M6 12.500H2V2.500h6M4 1.500h3" strokeWidth="1.500" />
            <path d="M8.500 3v3M11 3v3M9.700 9.500v4" strokeWidth="1.200" />
            <path d="M6.800 5.800H13v2l-1.600 2H8.400l-1.600-2z" fill="#fff" stroke="none" />
            <path d="M4 5v6" strokeWidth="1.200" />
          </svg>
          <svg className="ml-[8px]" width="14" height="11" viewBox="0 0 14 11" fill="#fff">
            <path d="M0 9h1.800v2H0zM2.900 7.500h1.800V11H2.900zM5.800 5.500h1.800V11H5.800zM8.700 3h1.800v8H8.700zM11.600.5h1.800V11h-1.800z" />
          </svg>
          <svg className="ml-[7px]" width="14" height="13" viewBox="0 0 14 13" fill="none" stroke="#fff">
            <path d="M.5 4.200H3L6.200 1v11L3 8.800H.5z" fill="#fff" stroke="none" />
            <path d="M8 4.300c.9 1.300.9 3.100 0 4.400M10 2.800c1.800 2.200 1.800 5.200 0 7.400M12 1.500c2 3 2 7 0 10" strokeWidth="1" />
          </svg>
          <div className="ml-[14px] w-[52px] pt-px text-center text-[10.5px] leading-[15px] tracking-[-0.1px] whitespace-nowrap">
            <div>7:53 PM</div>
            <div>20-Jan-17</div>
          </div>
          <div className="ml-[11px] h-[34px] w-[12px] border border-[#8fa6c8] bg-gradient-to-b from-[#7f96b8]/70 to-[#2b4a80]/70" />
        </div>
      </div>
    </div>
  );
}

export default function App() {
  return (
    <div className="flex h-[675px] w-[1200px] flex-col overflow-hidden bg-white font-['Open_Sans','Noto_Sans',sans-serif]">
      <header className="shrink-0 bg-[radial-gradient(ellipse_90px_26px_at_760px_0px,#2f5a9cb0,transparent),radial-gradient(ellipse_60px_60px_at_1200px_30px,#5f86c4c0,transparent),linear-gradient(to_bottom,#426fb2_0px,#7493c4_10px,#8fa6c8_20px,#98abc8_30px,#94a9cc_45px)]">
        <TitleBar />
        <TabStrip />
        <NavBar />
        <BookmarksBar />
      </header>
      <div className="flex h-[535px] shrink-0 overflow-hidden">
        <main className="ml-[176px] w-[629px] shrink-0">
          <StepsBar />
          <FareOptions />
        </main>
        <Sidebar />
        <Scrollbar />
      </div>
      <Taskbar />
    </div>
  );
}
